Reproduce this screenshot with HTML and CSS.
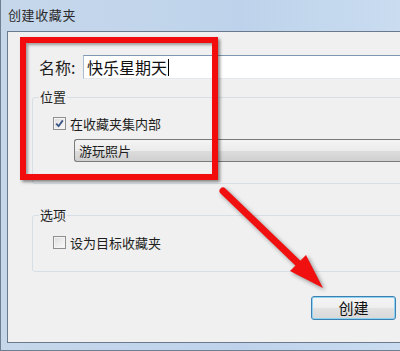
FILE: index.html
```html
<!DOCTYPE html>
<html>
<head>
<meta charset="utf-8">
<link rel="stylesheet" href="styles.css">
</head>
<body>
<div class="window">
  <div class="titlebar">创建收藏夹</div>
  <div class="client">
    <div class="name-row">
      <span class="name-label">名称:</span>
      <div class="name-input">快乐星期天<span class="caret"></span></div>
    </div>
    <fieldset class="group group-loc">
      <legend>位置</legend>
      <div class="check-row">
        <span class="check"><svg viewBox="0 0 9 9" width="9" height="9"><path d="M1.2 4.6 L3.6 7.2 L7.8 1.4" fill="none" stroke="#3a5488" stroke-width="1.8"/></svg></span>
        <span>在收藏夹集内部</span>
      </div>
      <div class="select">游玩照片</div>
    </fieldset>
    <fieldset class="group group-opt">
      <legend>选项</legend>
      <div class="check-row">
        <span class="check"></span>
        <span>设为目标收藏夹</span>
      </div>
    </fieldset>
    <div class="actions"><button class="btn">创建</button></div>
  </div>
  <div class="highlight"></div>
  <svg class="arrow" width="400" height="351" viewBox="0 0 400 351">
    <line x1="222" y1="191" x2="302" y2="268" stroke="#f01010" stroke-width="7" stroke-linecap="round"/>
    <polygon points="322,288 289,271 305,255" fill="#f01010"/>
  </svg>
</div>
</body>
</html>
```
FILE: styles.css
```css
* { box-sizing: border-box; }
html, body { margin: 0; padding: 0; }
body {
  width: 400px;
  height: 351px;
  overflow: hidden;
  font-family: "Noto Sans CJK SC", "Noto Sans", sans-serif;
  color: #1e1e1e;
}
.window {
  position: relative;
  width: 400px;
  height: 351px;
  background: linear-gradient(90deg, #c6d7ea, #bed3eb 60%, #c9dcf0);
  border-left: 1px solid #6e7f92;
  border-bottom: 1px solid #6e7f92;
  display: flex;
  flex-direction: column;
}
.titlebar {
  height: 31px;
  line-height: 30px;
  padding-left: 7px;
  font-size: 13px;
  color: #2a2a2a;
  letter-spacing: 0.6px;
}
.client {
  height: 312px;
  margin-left: 6px;
  border: 1px solid #6a7a8c;
  border-right: none;
  background: #f0f0f0;
  padding-left: 24px;
  display: flex;
  flex-direction: column;
}
.name-row {
  margin-top: 23px;
  display: flex;
  align-items: center;
  height: 24px;
}
.name-label {
  margin-left: 7px;
  font-size: 16px;
  width: 44px;
  line-height: 24px;
}
.name-input {
  flex: 1;
  height: 24px;
  background: #fff;
  border: 1px solid #abbdd0;
  border-top-color: #7f97b3;
  border-bottom-color: #e3e9ef;
  border-right: none;
  font-size: 16px;
  line-height: 21px;
  padding-left: 3px;
  display: flex;
  align-items: center;
  color: #111;
}
.caret {
  display: inline-block;
  width: 1px;
  height: 17px;
  background: #000;
  margin-left: 1px;
}
.group {
  margin: 0 -10px 0 0;
  padding: 0 0 0 6px;
  border: 1px solid #d5dfe5;
  border-radius: 3px;
}
.group legend {
  padding: 0 1px;
  font-size: 13px;
  line-height: 16px;
  color: #1e1e1e;
}
.group-loc {
  margin-top: 10px;
  padding-bottom: 21px;
}
.group-opt {
  margin-top: 23px;
  padding-bottom: 21px;
}
.check-row {
  display: flex;
  align-items: center;
  height: 16px;
  margin-left: 14px;
  margin-top: 10px;
  font-size: 13px;
  gap: 4px;
}
.group-opt .check-row { margin-top: 11px; }
.check {
  width: 13px;
  height: 13px;
  border: 1px solid #8e8f8f;
  background: linear-gradient(135deg, #dcdcdc, #fbfbfb);
  box-shadow: inset 0 0 0 1px #f4f4f4;
  display: flex;
  align-items: center;
  justify-content: center;
}
.select {
  margin: 8px 0 0 35px;
  height: 23px;
  border: 1px solid #7a7a7a;
  border-right: none;
  border-radius: 3px 0 0 3px;
  background: linear-gradient(#f4f4f4, #ebebeb 50%, #dddddd 51%, #d0d0d0);
  font-size: 13px;
  line-height: 21px;
  padding-left: 4px;
}
.actions {
  margin-top: 24px;
  display: flex;
  justify-content: flex-end;
  padding-right: 4px;
}
.btn {
  width: 85px;
  height: 24px;
  border: 1px solid #3c7fb1;
  border-radius: 3px;
  box-shadow: inset 0 0 0 1px #8fd3f2;
  background: linear-gradient(#f5f5f5, #eeeeee 50%, #e2e2e2 51%, #d8d8d8);
  font-family: "Noto Sans CJK SC", sans-serif;
  font-size: 15px;
  line-height: 20px;
  padding: 0;
  color: #111;
}
.highlight {
  position: absolute;
  left: 19px;
  top: 37px;
  width: 198px;
  height: 143px;
  border: 6px solid #f20c0c;
  box-shadow: 2px 2px 3px rgba(0,0,0,0.45), inset 2px 2px 3px rgba(0,0,0,0.35);
}
.arrow {
  position: absolute;
  left: 0;
  top: 0;
  filter: drop-shadow(2px 2px 2px rgba(0,0,0,0.4));
}
```
